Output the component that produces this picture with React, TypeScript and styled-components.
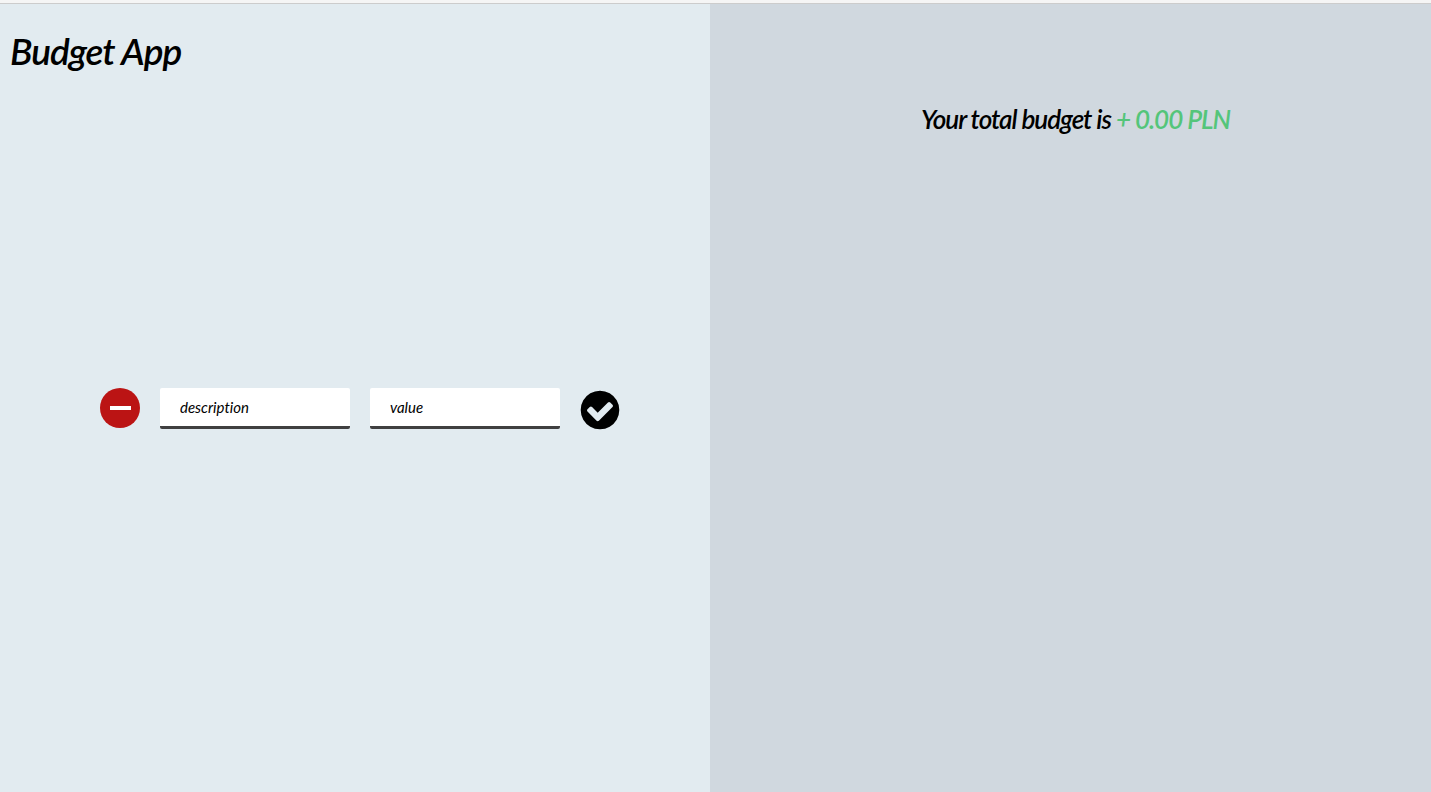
import React from "react";
import styled, { createGlobalStyle } from "styled-components";

const GlobalStyle = createGlobalStyle`
  *, *::before, *::after { box-sizing: border-box; }
  body {
    margin: 0;
    font-family: Lato, sans-serif;
    font-style: italic;
    color: #000;
  }
`;

const Page = styled.div`
  display: flex;
  flex-direction: column;
  min-height: 100vh;
`;

const TopEdge = styled.div`
  height: 4px;
  background: #f5f5f5;
  border-bottom: 1px solid #cccccc;
`;

const Columns = styled.main`
  flex: 1;
  display: grid;
  grid-template-columns: 710fr 721fr;
`;

const EntryPanel = styled.section`
  display: grid;
  grid-template-rows: 1fr auto 1fr;
  padding-top: 24px;
  background: #e2ebf0;
`;

const Title = styled.h1`
  margin: 0;
  padding: 0 10px;
  font-size: 37px;
  line-height: 46px;
  font-weight: 600;
  letter-spacing: -1px;
`;

const EntryForm = styled.form`
  display: flex;
  justify-content: center;
  align-items: flex-start;
  gap: 20px;
  padding-left: 10px;
`;

const IconButton = styled.button`
  display: flex;
  align-items: center;
  justify-content: center;
  width: 40px;
  height: 40px;
  padding: 0;
  border: 0;
  background: transparent;
  color: #000;
  cursor: pointer;
`;

const SignButton = styled(IconButton)`
  border-radius: 50%;
  background: #bb1414;
`;

const SubmitButton = styled(IconButton)`
  height: 44px;
`;

const MinusBar = styled.span`
  width: 21px;
  height: 4px;
  background: #fff;
`;

const CheckIcon = styled.svg`
  flex: none;
  width: 40px;
  height: 40px;
  fill: currentColor;
`;

const Field = styled.input`
  width: 190px;
  height: 41px;
  padding: 0 20px;
  border: 0;
  border-bottom: 3px solid #404040;
  border-radius: 2px;
  background: #fff;
  font: inherit;
  font-size: 15px;
  font-variant-ligatures: none;
  &::placeholder { color: #000; opacity: 1; }
`;

const SummaryPanel = styled.section`
  padding: 100px 10px 0 20px;
  background: #d0d8df;
  text-align: center;
`;

const Summary = styled.h2`
  margin: 0;
  font-size: 26px;
  line-height: 30px;
  font-weight: 600;
  letter-spacing: -1px;
`;

const Amount = styled.span`
  color: #54c57a;
`;

export default function App() {
  return (
    <Page>
      <GlobalStyle />
      <TopEdge />
      <Columns>
        <EntryPanel>
          <Title>Budget App</Title>
          <EntryForm onSubmit={(event) => event.preventDefault()}>
            <SignButton type="button" aria-label="Switch to income">
              <MinusBar />
            </SignButton>
            <Field type="text" placeholder="description" aria-label="description" />
            <Field type="text" placeholder="value" aria-label="value" />
            <SubmitButton type="submit" aria-label="Add entry">
              <CheckIcon viewBox="100 100 1592 1592" aria-hidden="true">
                <path d="M1412 734q0-28-18-46l-91-90q-19-19-45-19t-45 19l-408 407-226-226q-19-19-45-19t-45 19l-91 90q-18 18-18 46 0 27 18 45l362 362q19 19 45 19 27 0 46-19l543-543q18-18 18-45zm252 162q0 209-103 385.5t-279.5 279.5-385.5 103-385.5-103-279.5-279.5-103-385.5 103-385.5 279.5-279.5 385.5-103 385.5 103 279.5 279.5 103 385.5z" />
              </CheckIcon>
            </SubmitButton>
          </EntryForm>
        </EntryPanel>
        <SummaryPanel>
          <Summary>
            Your total budget is <Amount>+ 0.00 PLN</Amount>
          </Summary>
        </SummaryPanel>
      </Columns>
    </Page>
  );
}
